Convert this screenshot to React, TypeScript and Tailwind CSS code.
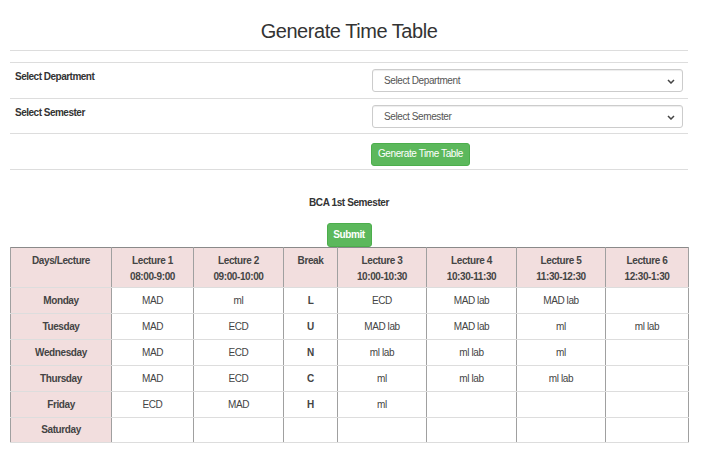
import React from "react";

const font = { fontFamily: '"Liberation Sans", Arial, sans-serif' };

const headers: [string, string?][] = [
  ["Days/Lecture"],
  ["Lecture 1", "08:00-9:00"],
  ["Lecture 2", "09:00-10:00"],
  ["Break"],
  ["Lecture 3", "10:00-10:30"],
  ["Lecture 4", "10:30-11:30"],
  ["Lecture 5", "11:30-12:30"],
  ["Lecture 6", "12:30-1:30"],
];

const widths = [101, 82, 90, 54, 89, 90, 89, 83];

const rows: string[][] = [
  ["Monday", "MAD", "ml", "L", "ECD", "MAD lab", "MAD lab", ""],
  ["Tuesday", "MAD", "ECD", "U", "MAD lab", "MAD lab", "ml", "ml lab"],
  ["Wednesday", "MAD", "ECD", "N", "ml lab", "ml lab", "ml", ""],
  ["Thursday", "MAD", "ECD", "C", "ml", "ml lab", "ml lab", ""],
  ["Friday", "ECD", "MAD", "H", "ml", "", "", ""],
  ["Saturday", "", "", "", "", "", "", ""],
];

function Chevron() {
  return (
    <svg width="8" height="5" viewBox="0 0 8 5" className="absolute right-[7px] top-[9px]">
      <path d="M1 1 L4 4 L7 1" fill="none" stroke="#444" strokeWidth="1.5" />
    </svg>
  );
}

function Select({ label }: { label: string }) {
  return (
    <div className="relative w-[311px] h-[23px] border border-[#ccc] rounded-[3px] bg-white shadow-[inset_0_1px_1px_rgba(0,0,0,0.075)]">
      <span className="absolute left-[11px] top-[5px] text-[10px] text-[#555] leading-[12px] tracking-[-0.4px]">{label}</span>
      <Chevron />
    </div>
  );
}

export default function App() {
  return (
    <div className="w-[718px] h-[467px] bg-white text-[#333] overflow-hidden" style={font}>
      <div className="mx-[10px] w-[678px]">
        <div className="h-[51px] flex items-end justify-center pb-[7px] border-b border-[#ddd]">
          <h1 className="text-[20px] leading-[24px] tracking-[-0.45px] text-[#333]">Generate Time Table</h1>
        </div>
        <div className="mt-[11px] border-t border-[#ddd]">
          <div className="h-[36px] flex border-b border-[#ddd]">
            <div className="w-[357px] pl-[5px] pt-[8px] text-[10px] font-bold leading-[12px] tracking-[-0.5px]">Select Department</div>
            <div className="pt-[6px] pl-[5px]"><Select label="Select Department" /></div>
          </div>
          <div className="h-[35px] flex border-b border-[#ddd]">
            <div className="w-[357px] pl-[5px] pt-[8px] text-[10px] font-bold leading-[12px] tracking-[-0.5px]">Select Semester</div>
            <div className="pt-[6px] pl-[5px]"><Select label="Select Semester" /></div>
          </div>
          <div className="h-[36px] flex border-b border-[#ddd]">
            <div className="w-[357px]" />
            <div className="pt-[6px] pl-[4px]">
              <button className="w-[99px] h-[23px] rounded-[3px] bg-[#5cb85c] border border-[#4cae4c] text-white text-[10px] leading-[12px] tracking-[-0.4px]">Generate Time Table</button>
            </div>
          </div>
        </div>
        <div className="mt-[27px] text-center text-[10px] font-bold leading-[12px] tracking-[-0.4px]">BCA 1st Semester</div>
        <div className="mt-[14px] flex justify-center">
          <button className="w-[45px] h-[24px] rounded-[3px] bg-[#5cb85c] border border-[#4cae4c] text-white text-[10px] font-bold leading-[12px] tracking-[-0.4px]">Submit</button>
        </div>
        <table className="border-collapse border border-[#8a8a8a] text-[10px] leading-[14px] tracking-[-0.4px] text-[#444]" style={{ tableLayout: "fixed", width: 678 }}>
          <colgroup>
            {widths.map((w, i) => (
              <col key={i} style={{ width: w }} />
            ))}
          </colgroup>
          <thead>
            <tr className="h-[40px] bg-[#f2dede]">
              {headers.map(([a, b], i) => (
                <th key={i} className="border-x border-[#a0a0a0] border-b border-b-[#ddd] align-top pt-[6px] font-bold text-center">
                  <div>{a}</div>
                  {b && <div className="mt-[2px]">{b}</div>}
                </th>
              ))}
            </tr>
          </thead>
          <tbody>
            {rows.map((r, ri) => (
              <tr key={ri} className={ri === 5 ? "h-[25px]" : "h-[26px]"}>
                {r.map((c, ci) => (
                  <td
                    key={ci}
                    className={
                      "border-x border-[#a0a0a0] border-b border-b-[#ddd] text-center align-middle " +
                      (ci === 0 ? "bg-[#f2dede] font-bold" : ci === 3 ? "bg-white font-bold" : "bg-white")
                    }
                  >
                    {c}
                  </td>
                ))}
              </tr>
            ))}
          </tbody>
        </table>
      </div>
    </div>
  );
}
